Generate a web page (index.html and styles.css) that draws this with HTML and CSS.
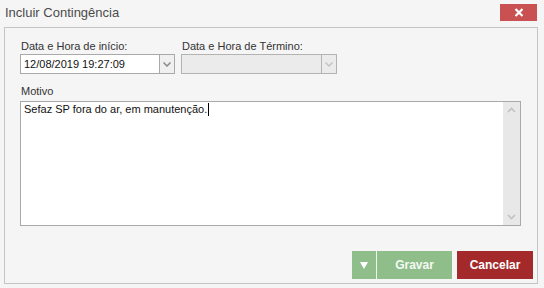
FILE: index.html
```html
<!DOCTYPE html>
<html lang="pt-BR">
<head>
<meta charset="utf-8">
<title>Incluir Contingência</title>
<link rel="stylesheet" href="styles.css">
</head>
<body>
<div class="window">
  <div class="titlebar">
    <span class="title">Incluir Contingência</span>
    <button class="close" aria-label="Fechar">
      <svg width="10" height="9" viewBox="0 0 10 9"><path d="M1.5 1 L8.5 8 M8.5 1 L1.5 8" stroke="#fff" stroke-width="2.2" stroke-linecap="butt"/></svg>
    </button>
  </div>
  <div class="panel">
    <div class="row">
      <div class="field f1">
        <label class="lbl">Data e Hora de início:</label>
        <div class="combo">
          <span class="value">12/08/2019 19:27:09</span>
          <span class="drop"><svg width="8" height="5" viewBox="0 0 8 5"><path d="M0.5 0.5 L4 4 L7.5 0.5" fill="none" stroke="#8a8a8a" stroke-width="1.5"/></svg></span>
        </div>
      </div>
      <div class="field f2">
        <label class="lbl">Data e Hora de Término:</label>
        <div class="combo disabled">
          <span class="value"></span>
          <span class="drop"><svg width="8" height="5" viewBox="0 0 8 5"><path d="M0.5 0.5 L4 4 L7.5 0.5" fill="none" stroke="#c4c4c4" stroke-width="1.5"/></svg></span>
        </div>
      </div>
    </div>
    <label class="lbl motivo-lbl">Motivo</label>
    <div class="memo">
      <div class="memo-text">Sefaz SP fora do ar, em manutenção.<span class="caret"></span></div>
      <div class="scroll">
        <svg width="9" height="6" viewBox="0 0 9 6"><path d="M1 5 L4.5 1.5 L8 5" fill="none" stroke="#c2c2c2" stroke-width="1.6"/></svg>
        <svg width="9" height="6" viewBox="0 0 9 6"><path d="M1 1 L4.5 4.5 L8 1" fill="none" stroke="#c2c2c2" stroke-width="1.6"/></svg>
      </div>
    </div>
    <div class="actions">
      <button class="btn split" aria-label="Mais opções"><svg width="8" height="7" viewBox="0 0 8 7"><path d="M0 0 H8 L4 7 Z" fill="#fff"/></svg></button>
      <button class="btn save">Gravar</button>
      <button class="btn cancel">Cancelar</button>
    </div>
  </div>
</div>
</body>
</html>
```
FILE: styles.css
```css
* { box-sizing: border-box; }
html, body {
  margin: 0;
  padding: 0;
  background: #f5f5f5;
  width: 544px;
  height: 288px;
  overflow: hidden;
  font-family: "Liberation Sans", Arial, sans-serif;
}
.window { width: 544px; height: 288px; }
.titlebar {
  height: 27px;
  display: flex;
  justify-content: space-between;
  align-items: flex-start;
  padding: 0 7px 0 5px;
}
.title {
  font-size: 13px;
  line-height: 15px;
  margin-top: 5px;
  color: #4b4b4b;
}
.close {
  margin-top: 4px;
  width: 37px;
  height: 17px;
  border: 0;
  padding: 0;
  background: #c95151;
  display: flex;
  align-items: center;
  justify-content: center;
}
.panel {
  margin-left: 4px;
  width: 534px;
  height: 257px;
  border: 1px solid #c4c4c4;
  padding: 12px 4px 0 15px;
  display: flex;
  flex-direction: column;
}
.row { display: flex; gap: 6px; }
.f1 { width: 155px; }
.f2 { width: 156px; }
.lbl {
  display: block;
  font-size: 11px;
  line-height: 13px;
  color: #333;
  padding-left: 1px;
  height: 14px;
}
.combo {
  height: 20px;
  border: 1px solid #a9a9a9;
  background: #fff;
  display: flex;
}
.combo.disabled { background: #ebebeb; border-color: #b3b3b3; }
.value {
  flex: 1;
  font-size: 11px;
  line-height: 18px;
  padding-left: 3px;
  color: #111;
}
.drop {
  width: 15px;
  border-left: 1px solid #a9a9a9;
  background: #f0f0f0;
  display: flex;
  align-items: center;
  justify-content: center;
}
.disabled .drop { background: #ebebeb; border-left-color: #b3b3b3; }
.motivo-lbl { margin-top: 11px; height: 16px; }
.memo {
  width: 501px;
  height: 125px;
  border: 1px solid #a9a9a9;
  background: #fff;
  display: flex;
}
.memo-text {
  flex: 1;
  font-size: 11px;
  line-height: 13px;
  padding: 1px 3px;
  color: #111;
}
.caret {
  display: inline-block;
  width: 1px;
  height: 13px;
  background: #000;
  vertical-align: top;
  margin-left: 1px;
}
.scroll {
  width: 17px;
  background: #e8e8e8;
  display: flex;
  flex-direction: column;
  justify-content: space-between;
  align-items: center;
  padding: 5px 0 5px;
}
.actions {
  margin-top: 25px;
  display: flex;
  justify-content: flex-end;
}
.btn {
  height: 28px;
  border: 0;
  padding: 0;
  font-family: "Liberation Sans", Arial, sans-serif;
  font-weight: bold;
  font-size: 12px;
  color: #fff;
}
.split {
  width: 25px;
  background: #8fbe8b;
  border-right: 1px solid #f2f7f1;
  display: flex;
  align-items: center;
  justify-content: center;
}
.save { width: 75px; background: #8fbe8b; color: #f4f9f3; }
.cancel { width: 76px; margin-left: 5px; background: #a3292b; }
```
